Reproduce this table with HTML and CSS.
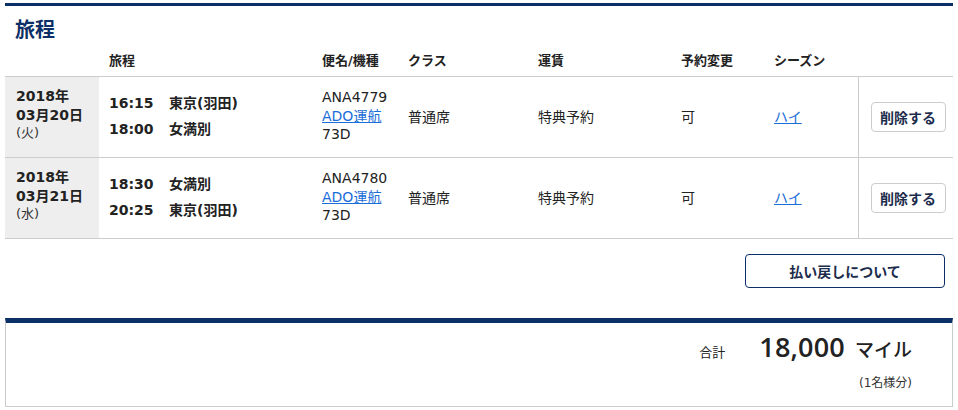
FILE: index.html
```html
<!DOCTYPE html>
<html lang="ja">
<head>
<meta charset="utf-8">
<link rel="stylesheet" href="styles.css">
</head>
<body>
<div class="page">
  <section class="itinerary">
    <h2 class="title">旅程</h2>
    <table class="trips">
      <colgroup>
        <col class="c-date"><col class="c-itin"><col class="c-flight"><col class="c-class"><col class="c-fare"><col class="c-change"><col class="c-season"><col class="c-btn">
      </colgroup>
      <thead>
        <tr>
          <th></th><th>旅程</th><th>便名/機種</th><th>クラス</th><th>運賃</th><th>予約変更</th><th>シーズン</th><th></th>
        </tr>
      </thead>
      <tbody>
        <tr>
          <td class="date"><b>2018年<br>03月20日</b><span class="dow">(火)</span></td>
          <td class="itin">
            <div class="leg"><span class="time">16:15</span><span class="place">東京(羽田)</span></div>
            <div class="leg"><span class="time">18:00</span><span class="place">女満別</span></div>
          </td>
          <td class="flight">ANA4779<br><a href="#">ADO運航</a><br>73D</td>
          <td>普通席</td>
          <td>特典予約</td>
          <td>可</td>
          <td><a href="#">ハイ</a></td>
          <td class="btncell"><button class="del">削除する</button></td>
        </tr>
        <tr>
          <td class="date"><b>2018年<br>03月21日</b><span class="dow">(水)</span></td>
          <td class="itin">
            <div class="leg"><span class="time">18:30</span><span class="place">女満別</span></div>
            <div class="leg"><span class="time">20:25</span><span class="place">東京(羽田)</span></div>
          </td>
          <td class="flight">ANA4780<br><a href="#">ADO運航</a><br>73D</td>
          <td>普通席</td>
          <td>特典予約</td>
          <td>可</td>
          <td><a href="#">ハイ</a></td>
          <td class="btncell"><button class="del">削除する</button></td>
        </tr>
      </tbody>
    </table>
    <div class="refund-row"><button class="refund">払い戻しについて</button></div>
  </section>
  <section class="total">
    <div class="total-line"><span class="label">合計</span><span class="amount">18,000</span><span class="unit">マイル</span></div>
    <div class="per">(1名様分)</div>
  </section>
</div>
</body>
</html>
```
FILE: styles.css
```css
* { box-sizing: border-box; }
body {
  margin: 0;
  background: #fff;
  font-family: "DejaVu Sans", "Noto Sans CJK JP", sans-serif;
  color: #222;
  font-size: 14px;
}
.page { padding: 3px 5px 0; width: 958px; }
.itinerary { border-top: 3px solid #0b2f66; }
.title {
  margin: 0;
  padding: 10px 0 0 10px;
  font-family: "Noto Sans CJK JP", sans-serif;
  font-size: 20px;
  line-height: 26px;
  font-weight: 700;
  color: #0b2f66;
}
.trips {
  width: 948px;
  border-collapse: collapse;
  table-layout: fixed;
  margin-top: 10px;
}
.c-date { width: 94px; }
.c-itin { width: 213px; }
.c-flight { width: 86px; }
.c-class { width: 130px; }
.c-fare { width: 143px; }
.c-change { width: 93px; }
.c-season { width: 94px; }
.c-btn { width: 95px; }
th {
  text-align: left;
  font-size: 13px;
  font-weight: 700;
  line-height: 18px;
  padding: 0 0 6px 10px;
  color: #222;
  border-bottom: 1px solid #cccccc;
}
td {
  height: 81px;
  padding: 0 0 0 10px;
  vertical-align: middle;
  line-height: 18px;
  border-bottom: 1px solid #cccccc;
}
td.date {
  background: #eeeeee;
  padding: 0 0 6px 11px;
  font-size: 14px;
  line-height: 19px;
}
td.date b { font-weight: 700; }
.dow { display: block; font-size: 13px; line-height: 16px; color: #333; }
.leg { display: flex; font-weight: 700; line-height: 26px; }
.itin { padding-bottom: 2px; }
.time { width: 60px; }
td.flight { font-size: 14px; line-height: 18.5px; padding-bottom: 2px; }
a { color: #1a6ed8; text-decoration: underline; }
td.btncell { border-left: 1px solid #cccccc; padding-left: 12px; }
.del {
  font-family: inherit;
  font-size: 14px;
  font-weight: 700;
  color: #1c2c4c;
  background: #fff;
  border: 1px solid #cccccc;
  border-radius: 4px;
  width: 75px;
  height: 30px;
  padding: 0;
}
.refund-row {
  display: flex;
  justify-content: flex-end;
  padding: 15px 8px 0 0;
  height: 79px;
}
.refund {
  font-family: inherit;
  font-size: 14px;
  font-weight: 700;
  color: #1c2c4c;
  background: #fff;
  border: 1.5px solid #0b2f66;
  border-radius: 4px;
  width: 200px;
  height: 34px;
  padding: 0;
}
.total {
  border-top: 5px solid #0b2f66;
  border-left: 1px solid #cccccc;
  border-right: 1px solid #cccccc;
  border-bottom: 1px solid #cccccc;
  height: 89px;
  padding: 6px 40px 0 0;
  display: flex;
  flex-direction: column;
  align-items: flex-end;
}
.total-line { display: flex; align-items: baseline; }
.label { font-size: 13px; margin-right: 34px; }
.amount { font-family: "Open Sans", sans-serif; font-size: 27px; font-weight: 600; letter-spacing: 0.2px; margin-right: 10px; line-height: 36px; }
.unit { font-size: 19px; font-weight: 500; }
.per { font-size: 12px; margin-top: 8px; color: #333; }
```
